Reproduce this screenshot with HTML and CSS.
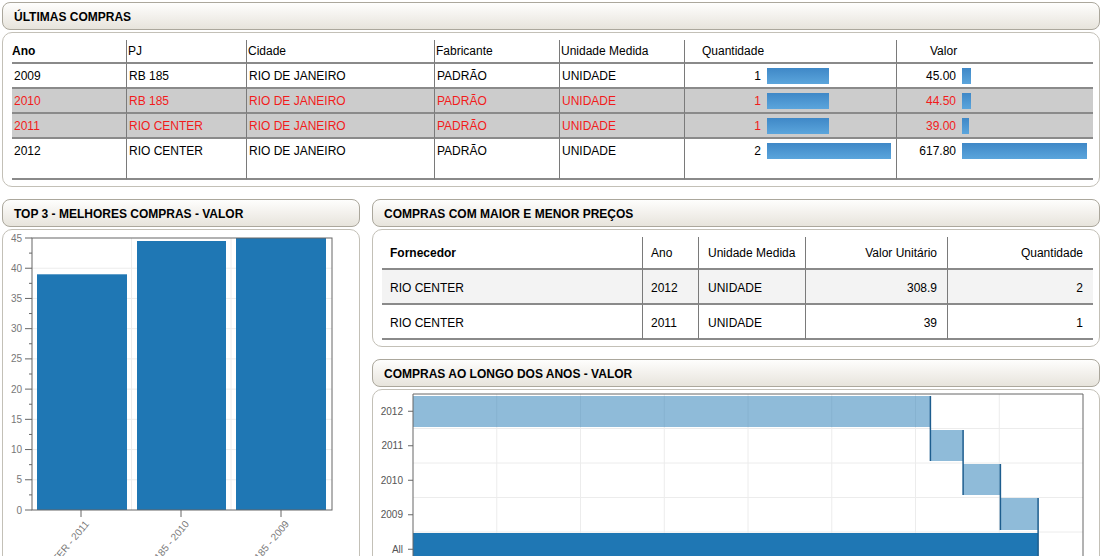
FILE: index.html
```html
<!DOCTYPE html>
<html lang="pt-BR">
<head>
<meta charset="utf-8">
<title>Compras</title>
<link rel="stylesheet" href="styles.css">
</head>
<body>
<div class="page">
  <section class="panel">
    <div class="panel-head">ÚLTIMAS COMPRAS</div>
    <div class="panel-body">
      <table class="grid recent">
        <colgroup>
          <col class="c-ano"><col class="c-pj"><col class="c-cidade"><col class="c-fab"><col class="c-un"><col class="c-qtd"><col class="c-val">
        </colgroup>
        <thead>
          <tr>
            <th class="strong">Ano</th>
            <th>PJ</th>
            <th>Cidade</th>
            <th>Fabricante</th>
            <th>Unidade Medida</th>
            <th class="th-qtd">Quantidade</th>
            <th class="th-val">Valor</th>
          </tr>
        </thead>
        <tbody>
          <tr>
            <td>2009</td><td>RB 185</td><td>RIO DE JANEIRO</td><td>PADRÃO</td><td>UNIDADE</td>
            <td><div class="bar-cell qtd"><span class="num">1</span><span class="bar" style="width:62px"></span></div></td>
            <td><div class="bar-cell val"><span class="num">45.00</span><span class="bar" style="width:9px"></span></div></td>
          </tr>
          <tr class="alert">
            <td>2010</td><td>RB 185</td><td>RIO DE JANEIRO</td><td>PADRÃO</td><td>UNIDADE</td>
            <td><div class="bar-cell qtd"><span class="num">1</span><span class="bar" style="width:62px"></span></div></td>
            <td><div class="bar-cell val"><span class="num">44.50</span><span class="bar" style="width:9px"></span></div></td>
          </tr>
          <tr class="alert">
            <td>2011</td><td>RIO CENTER</td><td>RIO DE JANEIRO</td><td>PADRÃO</td><td>UNIDADE</td>
            <td><div class="bar-cell qtd"><span class="num">1</span><span class="bar" style="width:62px"></span></div></td>
            <td><div class="bar-cell val"><span class="num">39.00</span><span class="bar" style="width:7px"></span></div></td>
          </tr>
          <tr class="tall">
            <td>2012</td><td>RIO CENTER</td><td>RIO DE JANEIRO</td><td>PADRÃO</td><td>UNIDADE</td>
            <td><div class="bar-cell qtd"><span class="num">2</span><span class="bar" style="width:124px"></span></div></td>
            <td><div class="bar-cell val"><span class="num">617.80</span><span class="bar" style="width:125px"></span></div></td>
          </tr>
        </tbody>
      </table>
    </div>
  </section>

  <div class="row">
    <div class="col col-left">
      <section class="panel">
        <div class="panel-head">TOP 3 - MELHORES COMPRAS - VALOR</div>
        <div class="panel-body chart-body tall-body">
          <svg class="chart" width="356" height="340" viewBox="0 0 356 340">
            <g class="gridlines">
              <path d="M29 249.78H329M29 219.56H329M29 189.33H329M29 159.11H329M29 128.89H329M29 98.67H329M29 68.44H329M29 38.22H329M128.5 8V280M228 8V280"/>
            </g>
            <g class="bars">
              <rect x="34" y="44.3" width="90" height="235.7"/>
              <rect x="134" y="11" width="89" height="269"/>
              <rect x="233" y="8" width="90" height="272"/>
            </g>
            <rect class="frame" x="29" y="8" width="300" height="272"/>
            <path class="ticks" d="M22 280H29M22 249.78H29M22 219.56H29M22 189.33H29M22 159.11H29M22 128.89H29M22 98.67H29M22 68.44H29M22 38.22H29M22 8H29M26 264.89H29M26 234.67H29M26 204.44H29M26 174.22H29M26 144H29M26 113.78H29M26 83.56H29M26 53.33H29M26 23.11H29M78 280V287M178 280V287M278 280V287"/>
            <g class="axis-labels y-labels">
              <text x="19" y="280" dy="0.35em">0</text>
              <text x="19" y="249.78" dy="0.35em">5</text>
              <text x="19" y="219.56" dy="0.35em">10</text>
              <text x="19" y="189.33" dy="0.35em">15</text>
              <text x="19" y="159.11" dy="0.35em">20</text>
              <text x="19" y="128.89" dy="0.35em">25</text>
              <text x="19" y="98.67" dy="0.35em">30</text>
              <text x="19" y="68.44" dy="0.35em">35</text>
              <text x="19" y="38.22" dy="0.35em">40</text>
              <text x="19" y="8" dy="0.35em">45</text>
            </g>
            <g class="axis-labels x-labels">
              <text transform="translate(84 292) rotate(-50)" dy="0.35em">RIO CENTER - 2011</text>
              <text transform="translate(184 292) rotate(-50)" dy="0.35em">RB 185 - 2010</text>
              <text transform="translate(284 292) rotate(-50)" dy="0.35em">RB 185 - 2009</text>
            </g>
          </svg>
        </div>
      </section>
    </div>

    <div class="col col-right">
      <section class="panel">
        <div class="panel-head">COMPRAS COM MAIOR E MENOR PREÇOS</div>
        <div class="panel-body">
          <table class="grid prices">
            <colgroup>
              <col class="p-forn"><col class="p-ano"><col class="p-un"><col class="p-val"><col class="p-qtd">
            </colgroup>
            <thead>
              <tr>
                <th class="strong">Fornecedor</th>
                <th>Ano</th>
                <th>Unidade Medida</th>
                <th class="right">Valor Unitário</th>
                <th class="right">Quantidade</th>
              </tr>
            </thead>
            <tbody>
              <tr class="striped">
                <td>RIO CENTER</td><td>2012</td><td>UNIDADE</td><td class="right">308.9</td><td class="right">2</td>
              </tr>
              <tr>
                <td>RIO CENTER</td><td>2011</td><td>UNIDADE</td><td class="right">39</td><td class="right">1</td>
              </tr>
            </tbody>
          </table>
        </div>
      </section>

      <section class="panel">
        <div class="panel-head">COMPRAS AO LONGO DOS ANOS - VALOR</div>
        <div class="panel-body chart-body tall-body">
          <svg class="chart" width="726" height="220" viewBox="0 0 726 220">
            <g class="gridlines">
              <path d="M123.75 4V220M207.5 4V220M291.25 4V220M375 4V220M458.75 4V220M542.5 4V220M626.25 4V220M40 38.5H710M40 73H710M40 107.5H710M40 142H710"/>
            </g>
            <g class="steps">
              <rect x="40" y="6" width="517.4" height="31"/>
              <rect x="557.4" y="40" width="32.7" height="31"/>
              <rect x="590.1" y="74" width="37.3" height="31"/>
              <rect x="627.4" y="108" width="37.7" height="32"/>
            </g>
            <rect class="total" x="40" y="143" width="625.1" height="80"/>
            <path class="edges" d="M557.4 6V71M590.1 40V105M627.4 74V140M665.1 108V220"/>
            <path class="frame" d="M40 220V4H710V220"/>
            <path class="ticks" d="M35 21.25H40M35 55.75H40M35 90.25H40M35 124.75H40M35 159.25H40"/>
            <g class="axis-labels wf-labels">
              <text x="30" y="21.25" dy="0.35em">2012</text>
              <text x="30" y="55.75" dy="0.35em">2011</text>
              <text x="30" y="90.25" dy="0.35em">2010</text>
              <text x="30" y="124.75" dy="0.35em">2009</text>
              <text x="30" y="159.25" dy="0.35em">All</text>
            </g>
          </svg>
        </div>
      </section>
    </div>
  </div>
</div>
</body>
</html>
```

FILE: styles.css
```css
html, body {
  margin: 0;
  padding: 0;
  overflow: hidden;
  background: #ffffff;
}

body {
  font-family: "Liberation Sans", Arial, sans-serif;
  font-size: 12px;
  color: #000000;
}

.page {
  width: 1098px;
  padding: 2px 1px 0 2px;
  display: flex;
  flex-direction: column;
  gap: 12px;
}

.row {
  display: flex;
  gap: 12px;
  align-items: flex-start;
}

.col {
  display: flex;
  flex-direction: column;
  gap: 12px;
}

.col-left { width: 358px; }
.col-right { width: 728px; }

.panel {
  display: flex;
  flex-direction: column;
  gap: 2px;
}

.panel-head {
  height: 26px;
  line-height: 29px;
  padding-left: 11px;
  border: 1px solid #aba79c;
  border-radius: 8px;
  background: linear-gradient(#fefefd 0%, #f4f2ee 45%, #e7e4dc 100%);
  font-weight: bold;
  font-size: 12px;
  color: #000;
  overflow: hidden;
}

.panel-body {
  border: 1px solid #c3c0b7;
  border-radius: 10px;
  padding: 7px 6px 6px 9px;
  background: #fff;
}

.chart-body {
  padding: 0;
  overflow: hidden;
}

.tall-body {
  height: 340px;
}

.chart {
  display: block;
  font-family: "Liberation Sans", Arial, sans-serif;
}

/* ---------- tables ---------- */
.grid {
  border-collapse: separate;
  border-spacing: 0;
  table-layout: fixed;
  width: 100%;
}

.grid th,
.grid td {
  text-align: left;
  font-weight: normal;
  line-height: 14px;
  white-space: nowrap;
  overflow: hidden;
  vertical-align: top;
}

.grid th + th,
.grid td + td {
  border-left: 1px solid #7a7a7a;
}

.grid .strong { font-weight: bold; }
.grid .right { text-align: right; }

/* recent purchases table */
.recent .c-ano { width: 114px; }
.recent .c-pj { width: 120px; }
.recent .c-cidade { width: 188px; }
.recent .c-fab { width: 125px; }
.recent .c-un { width: 125px; }
.recent .c-qtd { width: 212px; }
.recent .c-val { width: 197px; }

.recent th {
  padding: 4px 0 4px 1px;
  border-bottom: 2px solid #8a8a8a;
}

.recent th:first-child { padding-left: 0; }
.recent th.th-qtd { padding-left: 17px; }
.recent th.th-val { padding-left: 33px; }

.recent td {
  padding: 5px 0 4px 2px;
  border-bottom: 2px solid #8a8a8a;
}

.recent td + td { padding-left: 2px; }

.recent tr.alert td {
  background: #cccccc;
  color: #f21b1b;
}

.recent tr.tall td {
  padding-bottom: 20px;
}

.bar-cell {
  display: flex;
  align-items: center;
  height: 14px;
}

.bar-cell .num {
  text-align: right;
  flex: none;
}

.bar-cell.qtd .num { width: 74px; margin-right: 6px; }
.bar-cell.val .num { width: 57px; margin-right: 6px; }

.bar {
  display: block;
  flex: none;
  height: 16px;
  background: linear-gradient(#3f88c7, #5ba5dc);
}

/* price table */
.prices .p-forn { width: 260px; }
.prices .p-ano { width: 56px; }
.prices .p-un { width: 107px; }
.prices .p-val { width: 142px; }
.prices .p-qtd { width: 146px; }

.prices th {
  padding: 9px 10px 8px 8px;
  border-bottom: 2px solid #8a8a8a;
}

.prices td {
  padding: 11px 10px 8px 8px;
  border-bottom: 2px solid #8a8a8a;
}

.prices th:nth-child(3),
.prices td:nth-child(3) { padding-left: 9px; }

.prices tr.striped td { background: #f3f3f3; }

/* ---------- charts ---------- */
.gridlines path {
  stroke: #ececec;
  stroke-width: 1;
  fill: none;
}

.bars rect { fill: #1f77b4; }

.frame {
  fill: none;
  stroke: #666666;
  stroke-width: 1;
}

.ticks {
  stroke: #666666;
  stroke-width: 1;
  fill: none;
}

.axis-labels text {
  font-size: 10px;
  fill: #777777;
  text-anchor: end;
}

.wf-labels text { fill: #555555; }

.steps rect {
  fill: #1f77b4;
  fill-opacity: 0.5;
}

.total { fill: #1f77b4; }

.edges {
  stroke: #1d5d8e;
  stroke-width: 1.5;
  fill: none;
}
```
